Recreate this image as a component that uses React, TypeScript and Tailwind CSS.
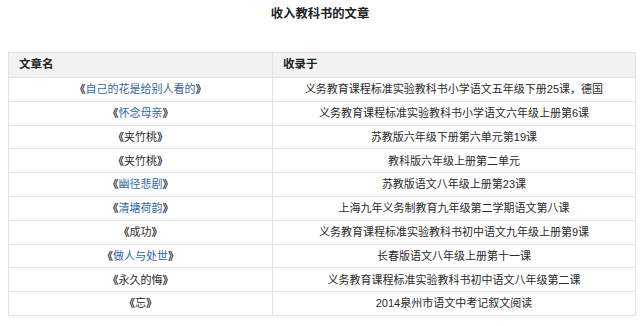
import React from 'react';

const rows = [
  { name: '自己的花是给别人看的', link: true, source: '义务教育课程标准实验教科书小学语文五年级下册25课，德国' },
  { name: '怀念母亲', link: true, source: '义务教育课程标准实验教科书小学语文六年级上册第6课' },
  { name: '夹竹桃', link: false, source: '苏教版六年级下册第六单元第19课' },
  { name: '夹竹桃', link: false, source: '教科版六年级上册第二单元' },
  { name: '幽径悲剧', link: true, source: '苏教版语文八年级上册第23课' },
  { name: '清塘荷韵', link: true, source: '上海九年义务制教育九年级第二学期语文第八课' },
  { name: '成功', link: false, source: '义务教育课程标准实验教科书初中语文九年级上册第9课' },
  { name: '做人与处世', link: true, source: '长春版语文八年级上册第十一课' },
  { name: '永久的悔', link: false, source: '义务教育课程标准实验教科书初中语文八年级第二课' },
  { name: '忘', link: false, source: '2014泉州市语文中考记叙文阅读' },
];

const App: React.FC = () => {
  return (
    <div
      className="w-[640px] h-[326px] bg-white text-[#2a2a2a] pt-[6px]"
      style={{ fontFamily: '"Liberation Sans", "Noto Sans CJK SC", sans-serif' }}
    >
      <h2 className="text-center text-[12.3px] font-bold leading-[17px] text-[#222]">收入教科书的文章</h2>
      <table className="mt-[29px] ml-[8px] w-[628px] border-collapse text-[11px]">
        <thead>
          <tr className="h-[25px] bg-[#f2f2f2]">
            <th className="w-[264px] border border-[#e3e3e3] px-[10px] text-left text-[11.5px] font-bold text-[#222]">文章名</th>
            <th className="border border-[#e3e3e3] px-[10px] text-left text-[11.5px] font-bold text-[#222]">收录于</th>
          </tr>
        </thead>
        <tbody>
          {rows.map((row, i) => (
            <tr key={i} className="h-[23.8px]">
              <td className="border border-[#e3e3e3] px-[10px] text-center">
                <span className="font-bold">《</span>
                {row.link ? <span className="text-[#3366aa]">{row.name}</span> : row.name}
                <span className="font-bold">》</span>
              </td>
              <td className="border border-[#e3e3e3] px-[10px] text-center">{row.source}</td>
            </tr>
          ))}
        </tbody>
      </table>
    </div>
  );
};

export default App;
